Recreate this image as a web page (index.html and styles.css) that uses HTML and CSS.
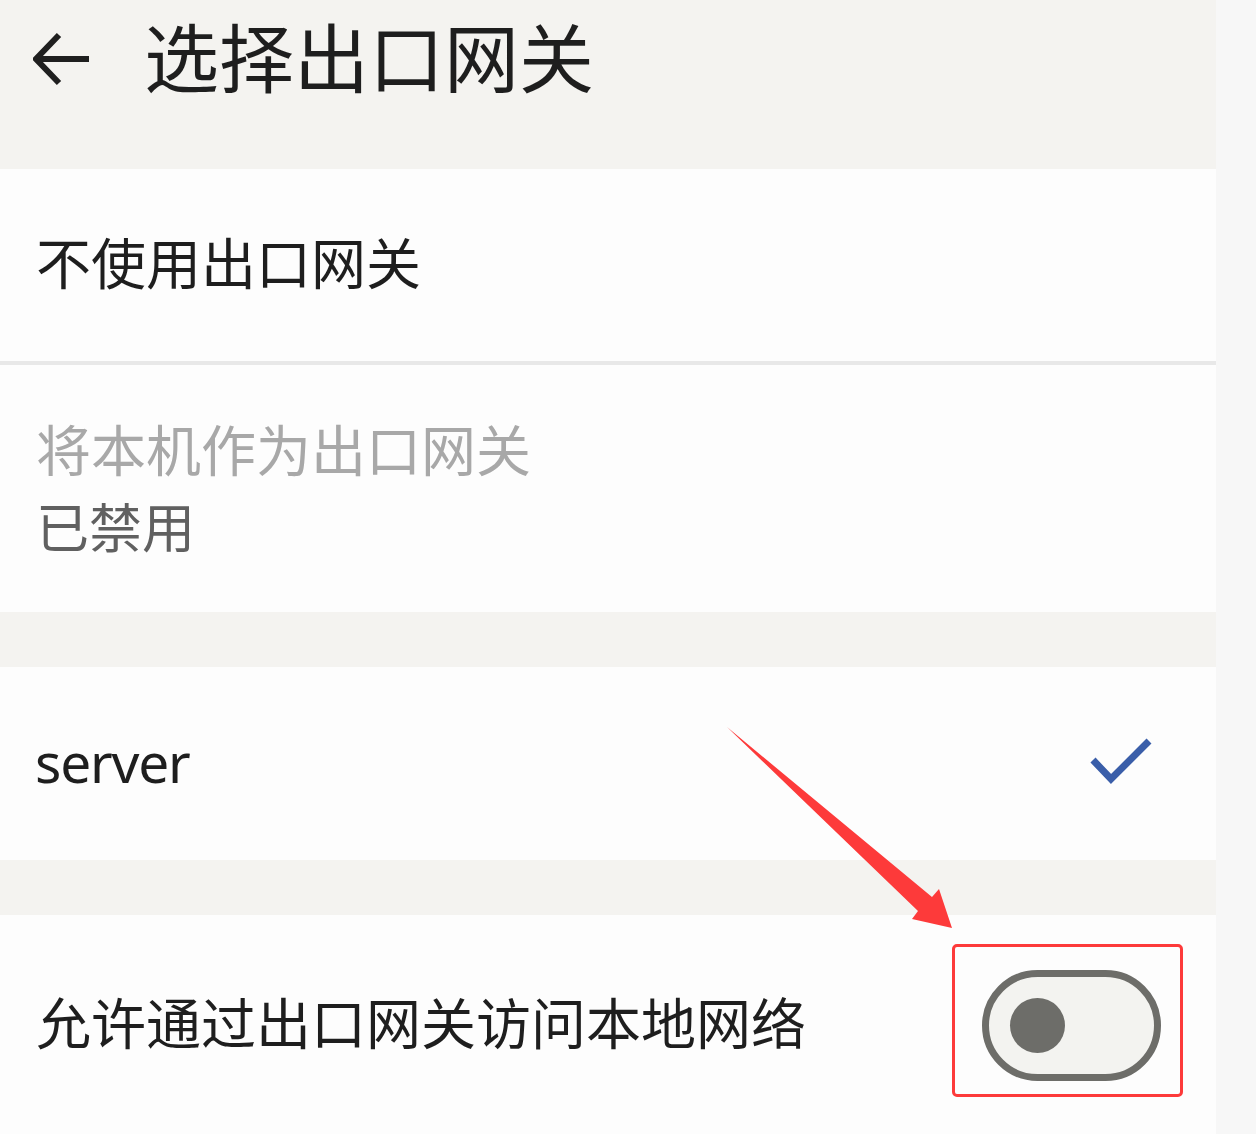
FILE: index.html
```html
<!DOCTYPE html>
<html>
<head>
    <title>选择出口网关</title>
    <link rel="stylesheet" href="styles.css">
</head>
<body>
    <div class="screen">
        <div class="toolbar">
            <svg class="back" width="56" height="56" viewBox="0 0 56 56">
                <path d="M3 27 H56 M26 3 L3 27 L26 51" fill="none" stroke="#1f1f1f" stroke-width="6"/>
            </svg>
            <h1>选择出口网关</h1>
        </div>

        <div class="group">
            <div class="row row-single divider">不使用出口网关</div>
            <div class="row row-double">
                <div class="disabled">将本机作为出口网关</div>
                <div class="summary">已禁用</div>
            </div>
        </div>

        <div class="group">
            <div class="row row-server">
                <span class="latin">server</span>
                <svg class="check" width="62" height="48" viewBox="0 0 62 48">
                    <path d="M3 23 L21 42 L59 4" fill="none" stroke="#3a5ea9" stroke-width="7"/>
                </svg>
            </div>
        </div>

        <div class="group">
            <div class="row row-switch">
                <span class="label">允许通过出口网关访问本地网络</span>
                <div class="highlight">
                    <div class="switch"><div class="knob"></div></div>
                </div>
            </div>
        </div>

        <svg class="pointer" width="1216" height="1134" viewBox="0 0 1216 1134">
            <polygon points="727,727 932,897 939,889 952,928 912,919 918,911" fill="#fd3a3a"/>
        </svg>
    </div>
</body>
</html>
```

FILE: styles.css
```css
body {
    margin: 0;
    background-color: #f7f7f7;
    font-family: "Noto Sans", "Noto Sans CJK SC", sans-serif;
    color: #1e1e1e;
}
.screen {
    position: relative;
    width: 1216px;
    height: 1134px;
    overflow: hidden;
    background-color: #f4f3f0;
}
.toolbar {
    height: 169px;
    display: flex;
    align-items: flex-start;
}
.back {
    margin: 32px 0 0 33px;
}
h1 {
    margin: 15px 0 0 55px;
    font-family: "Noto Sans CJK SC", sans-serif;
    font-size: 75px;
    font-weight: 400;
    line-height: 80px;
    color: #1e1e1e;
}
.group {
    background-color: #fdfdfd;
    margin-bottom: 55px;
}
.row {
    box-sizing: border-box;
    display: flex;
    align-items: center;
    padding-left: 36px;
    padding-bottom: 10px;
    font-family: "Noto Sans CJK SC", sans-serif;
    font-size: 55px;
}
.row-single {
    height: 196px;
}
.divider {
    border-bottom: 4px solid #e8e8e8;
}
.row-double {
    height: 247px;
    flex-direction: column;
    align-items: flex-start;
    justify-content: center;
    padding-bottom: 6px;
}
.disabled {
    color: #a8a8a8;
    line-height: 80px;
}
.summary {
    color: #606060;
    font-size: 53px;
    line-height: 77px;
}
.row-server {
    height: 193px;
    justify-content: space-between;
    padding-left: 35px;
    padding-right: 64px;
    padding-bottom: 0;
}
.latin {
    font-family: "Noto Sans", sans-serif;
    letter-spacing: -1.2px;
    margin-top: -4px;
}
.check {
    margin-top: -6px;
}
.row-switch {
    height: 220px;
    justify-content: space-between;
    padding-right: 33px;
    padding-bottom: 0;
}
.label {
    margin-top: -10px;
}
.highlight {
    border: 3px solid #fd3a3a;
    border-radius: 5px;
    padding: 23px 19px 13px 27px;
    margin-bottom: 9px;
}
.switch {
    box-sizing: border-box;
    width: 179px;
    height: 111px;
    border: 7px solid #6d6d69;
    border-radius: 56px;
    background-color: #f3f3f0;
    display: flex;
    align-items: center;
    padding-left: 21px;
}
.knob {
    width: 55px;
    height: 55px;
    border-radius: 50%;
    background-color: #6d6d69;
}
.pointer {
    position: absolute;
    left: 0;
    top: 0;
    pointer-events: none;
}
```
